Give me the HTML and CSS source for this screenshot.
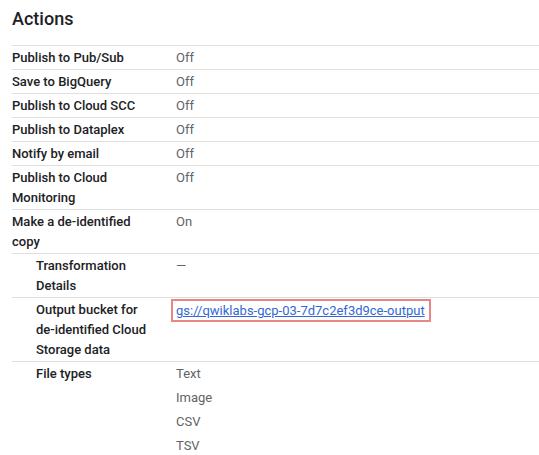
FILE: index.html
```html
<!DOCTYPE html>
<html>
<head>
<meta charset="utf-8">
<link rel="stylesheet" href="styles.css">
</head>
<body>
<div class="panel">
  <h2 class="title">Actions</h2>
  <div class="table">
    <div class="row"><div class="label">Publish to Pub/Sub</div><div class="value">Off</div></div>
    <div class="row"><div class="label">Save to BigQuery</div><div class="value">Off</div></div>
    <div class="row"><div class="label">Publish to Cloud SCC</div><div class="value">Off</div></div>
    <div class="row"><div class="label">Publish to Dataplex</div><div class="value">Off</div></div>
    <div class="row"><div class="label">Notify by email</div><div class="value">Off</div></div>
    <div class="row"><div class="label">Publish to Cloud Monitoring</div><div class="value">Off</div></div>
    <div class="row"><div class="label">Make a de-identified copy</div><div class="value">On</div></div>
    <div class="row sub"><div class="label">Transformation Details</div><div class="value">—</div></div>
    <div class="row sub"><div class="label">Output bucket for de-identified Cloud Storage data</div><div class="value"><span class="highlight"><a class="link" href="#">gs://qwiklabs-gcp-03-7d7c2ef3d9ce-output</a></span></div></div>
    <div class="row sub last"><div class="label">File types</div>
      <div class="value list">
        <div class="item">Text</div>
        <div class="item">Image</div>
        <div class="item">CSV</div>
        <div class="item">TSV</div>
      </div>
    </div>
  </div>
</div>
</body>
</html>
```
FILE: styles.css
```css
html, body {
  margin: 0;
  padding: 0;
  background: #ffffff;
}
body {
  font-family: Roboto, "Liberation Sans", Arial, sans-serif;
  font-size: 13px;
  color: #202124;
}
.panel {
  padding: 7px 0 0 12px;
}
.title {
  margin: 0 0 14px 0;
  font-size: 18px;
  line-height: 24px;
  font-weight: 500;
  color: #202124;
}
.table {
  display: flex;
  flex-direction: column;
}
.row {
  display: grid;
  grid-template-columns: 164px 1fr;
  border-top: 1px solid #e0e0e0;
  padding: 2px 0 1px 0;
  line-height: 20px;
}
.label {
  font-weight: 500;
  color: #202124;
  padding-right: 24px;
}
.sub .label {
  padding-left: 24px;
}
.value {
  color: #5f6368;
}
.highlight {
  display: inline-block;
  border: 2px solid #e88585;
  padding: 0 4px 0 3px;
  margin: -1px 0 0 -5px;
  line-height: 19px;
}
.link {
  color: #3367d6;
  text-decoration: underline;
}
.list .item {
  line-height: 20px;
  margin-bottom: 4px;
}
```
